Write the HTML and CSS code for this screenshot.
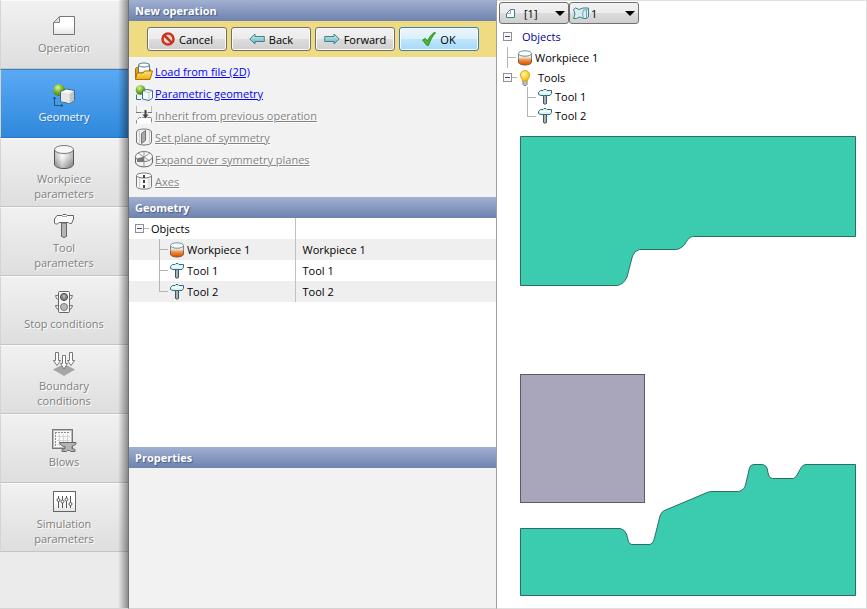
FILE: index.html
```html
<!DOCTYPE html>
<html lang="en">
<head>
    <meta charset="UTF-8">
    <meta name="viewport" content="width=device-width, initial-scale=1.0">
    <title>New operation</title>
    <link rel="stylesheet" href="styles.css">
</head>
<body>
    <!-- shared icons -->
    <svg class="defs" aria-hidden="true">
        <defs>
            <linearGradient id="gPaper" x1="0" y1="0" x2="0" y2="1">
                <stop offset="0" stop-color="#fff"/><stop offset=".5" stop-color="#fff"/><stop offset="1" stop-color="#e2e2e2"/>
            </linearGradient>
            <linearGradient id="gCyl" x1="0" y1="0" x2="0" y2="1">
                <stop offset="0" stop-color="#fff"/><stop offset=".4" stop-color="#f4f4f4"/><stop offset="1" stop-color="#777"/>
            </linearGradient>
            <linearGradient id="gSide" x1="0" y1="0" x2="1" y2="0">
                <stop offset="0" stop-color="#888" stop-opacity=".5"/><stop offset=".4" stop-color="#fff" stop-opacity=".5"/><stop offset="1" stop-color="#777" stop-opacity=".5"/>
            </linearGradient>
            <linearGradient id="gHot" x1="0" y1="0" x2="0" y2="1">
                <stop offset="0" stop-color="#fff"/><stop offset=".3" stop-color="#f3e0d0"/><stop offset=".55" stop-color="#f09040"/><stop offset="1" stop-color="#cc5000"/>
            </linearGradient>
            <linearGradient id="gTeal" x1="0" y1="0" x2="0" y2="1">
                <stop offset="0" stop-color="#d5f0f2"/><stop offset="1" stop-color="#5db0b8"/>
            </linearGradient>
            <linearGradient id="gFolder" x1="0" y1="0" x2="0" y2="1">
                <stop offset="0" stop-color="#ffe07a"/><stop offset="1" stop-color="#f0b010"/>
            </linearGradient>
            <radialGradient id="gGreen" cx=".4" cy=".3" r=".7">
                <stop offset="0" stop-color="#e4f5b0"/><stop offset=".4" stop-color="#8fc63a"/><stop offset="1" stop-color="#3f7c0c"/>
            </radialGradient>
            <radialGradient id="gBulb" cx=".4" cy=".35" r=".7">
                <stop offset="0" stop-color="#fff9c8"/><stop offset=".5" stop-color="#ffd83a"/><stop offset="1" stop-color="#f0b000"/>
            </radialGradient>
        </defs>
        <symbol id="hot" viewBox="0 0 16 16">
            <path d="M1.500 4v8c0 4 13 4 13 0V4z" fill="url(#gHot)" stroke="#8a5a3a"/>
            <path d="M1.500 9V4M14.500 4v5" fill="none" stroke="#6b929a"/>
            <ellipse cx="8" cy="3.500" rx="6.500" ry="2.700" fill="#fbfdfd" stroke="#6b929a"/>
        </symbol>
        <symbol id="hammer" viewBox="0 0 16 16">
            <path d="M6.500 6.500h3v8q-1.500 1.500-3 0z" fill="#a9b4b8" stroke="#3d5661"/>
            <path d="M1.500 5.500v-2L3.500 1.500H6l1-1h2l1 1h4.500v3l-1.500 2H4z" fill="#e1f2f4" stroke="#2d7284"/>
            <path d="M3 3.500h10" stroke="#fff"/>
        </symbol>
        <symbol id="shapes" viewBox="0 0 18 16">
            <circle cx="5.500" cy="5" r="4.800" fill="url(#gGreen)"/>
            <path d="M7.500 6l4-1.500 6 1v7.500l-3.500 2.500-6.500-1.500z" fill="#f8fafa" stroke="#2f7684"/>
            <path d="M8 6.500l6 1v7.500M14 7.500L17 6" fill="none" stroke="#b5cbd0"/>
            <path d="M1.500 9.500v5H6" fill="none" stroke="#2f7684"/>
        </symbol>
    </svg>

    <div class="app">
        <nav class="steps">
            <button type="button" class="step">
                <svg width="24" height="24" viewBox="0 0 24 24"><path d="M7.500 2.500h15v18h-21v-12z" fill="url(#gPaper)" stroke="#777"/><path d="M7.500 2.500v6h-6z" fill="#ddd" stroke="#888"/></svg>
                <span>Operation</span>
            </button>
            <button type="button" class="step active">
                <svg width="24" height="24" viewBox="0 0 24 24">
                    <circle cx="7" cy="7" r="6" fill="url(#gGreen)"/>
                    <path d="M8.500 8.500l6-2.500 8 1.500v10l-5 3-9-2z" fill="#fafafa" stroke="#3f6d7c"/>
                    <path d="M9 9l8.500 1.500V20l-8.500-2z" fill="#e6e6e6"/><path d="M17.500 10.500V20l4.500-3V8z" fill="#c3c6c8"/>
                    <path d="M2.500 22.500v-8M1 16l1.500-2L4 16M2.500 22.500h8M9 21l2 1.500L9 24" fill="none" stroke="#1d5878"/>
                </svg>
                <span>Geometry</span>
            </button>
            <button type="button" class="step">
                <svg width="24" height="24" viewBox="0 0 24 24"><path d="M2.500 4.500v14.500c0 2.500 4 4.500 9.500 4.500s9.500-2 9.500-4.500V4.500z" fill="url(#gCyl)" stroke="#555"/><path d="M3 5v14c0 2 4 4 9 4s9-2 9-4V5z" fill="url(#gSide)"/><ellipse cx="12" cy="4.500" rx="9.500" ry="4" fill="#f8f8f8" stroke="#777"/></svg>
                <span>Workpiece<br>parameters</span>
            </button>
            <button type="button" class="step">
                <svg width="24" height="24" viewBox="0 0 24 24"><path d="M9.500 9h5v13.500q-2.500 2-5 0z" fill="#b5b5b5" stroke="#666"/><path d="M2.500 9V5L5 1.500h5l1-1h3l1 1h6.500V5l-2 4.500h-2l-1-1H7l-1.500 1.500H3.500z" fill="#fbfbfb" stroke="#666"/><path d="M10 2.500h5" stroke="#aaa"/></svg>
                <span>Tool<br>parameters</span>
            </button>
            <button type="button" class="step">
                <svg width="24" height="24" viewBox="0 0 24 24"><path d="M6.500 5.500h-3l1 3 2 1M17.500 5.500h3l-1 3-2 1M6.500 15.500h-3l1 3 2 1M17.500 15.500h3l-1 3-2 1" fill="#eee" stroke="#777"/><rect x="6.500" y="1.500" width="11" height="21" rx="1" fill="#f4f4f4" stroke="#666"/><circle cx="12" cy="7" r="3.500" fill="#888" stroke="#444"/><circle cx="12" cy="6" r="1.500" fill="#b5b5b5"/><circle cx="12" cy="17" r="3.500" fill="#b8b8b8" stroke="#777"/></svg>
                <span>Stop conditions</span>
            </button>
            <button type="button" class="step">
                <svg width="24" height="24" viewBox="0 0 24 24"><path d="M12 12l11 5.500L12 24 1 17.500z" fill="#a5a5a5"/><path d="M3.500.5h3v8h2L5 13.500 1.500 8.500h2zM17.500.5h3v8h2L19 13.500 15.500 8.500h2zM10.500 3.500h3v8h2L12 17l-3.500-5.500h2z" fill="#fff" stroke="#777"/></svg>
                <span>Boundary<br>conditions</span>
            </button>
            <button type="button" class="step">
                <svg width="26" height="24" viewBox="0 0 26 24"><rect x="1.500" y="1.500" width="20" height="19" fill="#fafafa" stroke="#777"/><rect x="2.500" y="2.500" width="18" height="17" fill="none" stroke="#bbb"/><path d="M4 4.500h15M4.500 4v14" stroke="#888" stroke-dasharray="2 1"/><path d="M8.500 6v12M12.500 6v12M16.500 6v12M6 8.500h13M6 12.500h13M6 16.500h13" stroke="#d4d4d4"/><path d="M8.500 14.500H25v1.500l-4 2.500v2l3 1v2h-4.500l-1-1h-2l-1 1H11v-2l3-1v-2c-3 0-5-2-5.500-4z" fill="#b4b4b4" stroke="#666"/></svg>
                <span>Blows</span>
            </button>
            <button type="button" class="step">
                <svg width="24" height="24" viewBox="0 0 24 24"><rect x="1.500" y="1.500" width="22" height="20" fill="url(#gPaper)" stroke="#666"/><path d="M6.500 6v12M10.500 6v12M14.500 6v12M18.500 6v12" stroke="#555"/><circle cx="6.500" cy="10" r="1.500" fill="#fff" stroke="#555"/><circle cx="10.500" cy="11.500" r="1.500" fill="#fff" stroke="#555"/><circle cx="14.500" cy="9.500" r="1.500" fill="#fff" stroke="#555"/><circle cx="18.500" cy="14" r="1.500" fill="#fff" stroke="#555"/></svg>
                <span>Simulation<br>parameters</span>
            </button>
        </nav>

        <main class="editor">
            <h2 class="bar">New operation</h2>
            <div class="toolbar">
                <button type="button" class="btn"><svg width="14" height="14" viewBox="0 0 14 14"><circle cx="7" cy="7" r="5.500" fill="#f4d8d2" stroke="#c93522" stroke-width="2.500"/><path d="M3.500 3.500l7 7" stroke="#c93522" stroke-width="2.500"/></svg>Cancel</button>
                <button type="button" class="btn"><svg width="16" height="12" viewBox="0 0 16 12"><path d="M.8 6L6 1v2.500h9.300v5H6V11z" fill="url(#gTeal)" stroke="#43828c"/></svg>Back</button>
                <button type="button" class="btn"><svg width="16" height="12" viewBox="0 0 16 12"><path d="M15.200 6L10 1v2.500H.7v5H10V11z" fill="url(#gTeal)" stroke="#43828c"/></svg>Forward</button>
                <button type="button" class="btn ok"><svg width="14" height="14" viewBox="0 0 14 14"><path d="M.7 8l2.600-1.500L5.500 9C7 5.500 9.500 2.500 12 .7h1.500C10.500 4 8 8.500 6.500 13.300H4.800z" fill="#4fb52e" stroke="#2c8a1c"/></svg>OK</button>
            </div>

            <ul class="links">
                <li>
                    <svg width="18" height="18" viewBox="0 0 18 18"><path d="M.5 17V6.500l1-1h4l1 2h9V12" fill="#dda010" stroke="#a87400"/><path d="M3.500 3v8h11V3z" fill="url(#gPaper)" stroke="#577f8c"/><ellipse cx="9" cy="3" rx="5.500" ry="2" fill="#fff" stroke="#577f8c"/><path d="M.5 17.500L2 11h6l1.500-2H17.500L15 17.500z" fill="url(#gFolder)" stroke="#a87400"/></svg>
                    <a href="#load">Load from file (2D)</a>
                </li>
                <li><svg width="18" height="16"><use href="#shapes"/></svg><a href="#parametric">Parametric geometry</a></li>
                <li class="off">
                    <svg width="18" height="18" viewBox="0 0 18 18"><path d="M1.500 0v6.500h15V0" fill="#f4f4f4" stroke="#bbb"/><path d="M1 6.500h5M13 6.500h4" stroke="#777"/><path d="M1.500 17.500v-3l3-3h12v6" fill="#fff" stroke="#888" stroke-dasharray="4 1"/><path d="M10.500 4v5" stroke="#444" stroke-width="2"/><path d="M7.500 8.500h6l-3 4z" fill="#444"/></svg>
                    <a href="#inherit">Inherit from previous operation</a>
                </li>
                <li class="off">
                    <svg width="18" height="18" viewBox="0 0 18 18"><path d="M1.500 4v10c0 4 15 4 15 0V4c0-4-15-4-15 0z" fill="#f2f2f2" stroke="#777"/><path d="M4.500 3v13M14.500 3v13" stroke="#ccc"/><path d="M6.500 5.500l4-3v10l-4 3z" fill="#aaa" stroke="#777"/></svg>
                    <a href="#plane">Set plane of symmetry</a>
                </li>
                <li class="off">
                    <svg width="18" height="18" viewBox="0 0 18 18"><path d="M.5 6v6c0 6.500 17 6.500 17 0V6" fill="#f2f2f2" stroke="#666"/><ellipse cx="9" cy="6.500" rx="8.500" ry="5" fill="#f8f8f8" stroke="#777"/><path d="M9 1v15M3 3l12 8M15 3L3 11" stroke="#999"/><path d="M2 8.500l7-2V12H2z" fill="#777"/></svg>
                    <a href="#expand">Expand over symmetry planes</a>
                </li>
                <li class="off">
                    <svg width="18" height="18" viewBox="0 0 18 18"><path d="M1.500 3.500v11c0 3.500 15 3.500 15 0v-11" fill="#f6f6f6" stroke="#777"/><ellipse cx="9" cy="3.500" rx="7.500" ry="2.500" fill="#fff" stroke="#777"/><path d="M4.500 6v9M14 6v9" stroke="#ccc"/><path d="M9 3v13" stroke="#444" stroke-width="2" stroke-dasharray="3 2"/></svg>
                    <a href="#axes">Axes</a>
                </li>
            </ul>

            <h2 class="bar">Geometry</h2>
            <div class="grid">
                <table>
                    <colgroup><col class="names"><col></colgroup>
                    <tr><td><div class="cell root"><i class="toggle"></i>Objects</div></td><td></td></tr>
                    <tr><td><div class="cell leaf"><svg width="16" height="16"><use href="#hot"/></svg>Workpiece 1</div></td><td>Workpiece 1</td></tr>
                    <tr><td><div class="cell leaf"><svg width="16" height="16"><use href="#hammer"/></svg>Tool 1</div></td><td>Tool 1</td></tr>
                    <tr><td><div class="cell leaf last"><svg width="16" height="16"><use href="#hammer"/></svg>Tool 2</div></td><td>Tool 2</td></tr>
                </table>
            </div>

            <h2 class="bar">Properties</h2>
            <div class="props"></div>
        </main>

        <section class="view">
            <div class="pickers">
                <div class="picker">
                    <svg width="18" height="16" viewBox="0 0 18 16"><path d="M8.500 4.500h4v8h-8v-4z" fill="#fff" stroke="#3e7d8a"/><path d="M8.500 4.500v4h-4" fill="none" stroke="#8ab0b8"/></svg>
                    <select aria-label="Operation number"><option>[1]</option></select>
                </div>
                <div class="picker">
                    <svg width="18" height="16" viewBox="0 0 18 16"><path d="M1.500 4.500l2-1.500q3.500 3 7.500 0h5.500v9l-2 1.500h-3q-4-3-7 0h-3q3-4.500 0-9z" fill="#d6eef0" stroke="#3e7d8a"/><path d="M11.500 5q-2 4 0 8M11.500 5h3v8M14.500 5l2-2" fill="none" stroke="#6fa3ad"/></svg>
                    <select aria-label="Blow number"><option>1</option></select>
                </div>
            </div>
            <ul class="tree">
                <li class="top"><i class="toggle"></i><span>Objects</span></li>
                <li class="item"><svg width="16" height="16"><use href="#hot"/></svg>Workpiece 1</li>
                <li class="group"><i class="toggle"></i><svg width="16" height="16" viewBox="0 0 16 16"><path d="M6 10.500h4v4l-1 1H7l-1-1z" fill="#b9c2c6" stroke="#71838a"/><path d="M8 .5a4.700 4.700 0 0 1 4.700 4.700c0 2.500-2.200 3.200-2.200 5.800h-5c0-2.600-2.200-3.300-2.200-5.800A4.700 4.700 0 0 1 8 .5z" fill="url(#gBulb)" stroke="#dba52a"/></svg>Tools</li>
                <li class="sub"><svg width="16" height="16"><use href="#hammer"/></svg>Tool 1</li>
                <li class="sub last"><svg width="16" height="16"><use href="#hammer"/></svg>Tool 2</li>
            </ul>
            <svg class="scene" viewBox="497 127 369 481" preserveAspectRatio="xMinYMin meet" role="img" aria-label="Workpiece between two tools">
                <path class="tool" d="M520.500 136.500H855.500V236.500H693.500C690 236.500 688 239 686 242.500C684 246 680 249 676.500 249.500H639.500Q634 251 632.500 256L627 277Q624 284 617.500 285.500H520.500Z"/>
                <rect class="workpiece" x="520.500" y="374.500" width="124" height="128"/>
                <path class="tool" d="M520.500 528.500H620.500Q625 530 626.500 534L628.500 541.500Q629.500 544.500 632 544.500H650Q653 543.500 654 540L660 516Q661.500 511.500 664.500 510.500L706 493Q709 491.500 712 491.500H738.500Q744.500 490 745.500 485L749.500 468Q750.500 464.500 754 464.500H762.500Q766 465 767 468L768.500 475Q769.500 478.500 772.500 478.500H793.500Q796 477 797 475L801.500 467Q803 464.500 806 464.500H855.500V595.500H520.500Z"/>
            </svg>
        </section>
    </div>
</body>
</html>
```

FILE: styles.css
```css
* {
    box-sizing: border-box;
}
body {
    margin: 0;
    font-family: "Segoe UI", "Open Sans", "Noto Sans", sans-serif;
    font-size: 11px;
    line-height: 15px;
    color: #000;
    background: #fff;
}
button, select {
    font: inherit;
    color: inherit;
}
svg {
    flex: none;
}
.defs {
    position: absolute;
    width: 0;
    height: 0;
}
.app {
    display: grid;
    grid-template-columns: 128px 369px 1fr;
    min-height: 100vh;
}

/* left column with the wizard steps */
.steps {
    position: relative;
    background: #ebebeb;
    border-bottom: 1px solid #d4d4d4;
}
.steps::after {
    content: "";
    position: absolute;
    top: 0;
    right: 0;
    bottom: 0;
    width: 10px;
    background: linear-gradient(to right, rgba(0, 0, 0, 0), rgba(0, 0, 0, 0.4));
    pointer-events: none;
}
.step {
    display: flex;
    flex-direction: column;
    align-items: center;
    justify-content: center;
    gap: 2px;
    width: 100%;
    height: 69px;
    padding: 0 1px 0 0;
    border: none;
    border-left: 1px solid #d4d4d4;
    border-top: 1px solid #fafafa;
    border-bottom: 1px solid #c4c4c4;
    background: linear-gradient(#f1f1f1, #dedede);
    color: #808080;
    text-shadow: 1px 1px 0 #fff;
}
.step.active {
    border-top-color: #3b7fc4;
    border-bottom-color: #2a76c4;
    background: linear-gradient(#5aa9f5, #2f88dc);
    color: #fff;
    text-shadow: 1px 1px 0 #2b6fb5;
}

/* middle column */
.editor {
    display: flex;
    flex-direction: column;
    background: #f2f2f2;
    border-left: 1px solid #707070;
    border-right: 1px solid #a0a0a0;
    border-bottom: 1px solid #d4d4d4;
}
.bar {
    margin: 0;
    height: 21px;
    padding: 0 6px;
    line-height: 21px;
    font-size: 11px;
    font-weight: bold;
    color: #fff;
    background: linear-gradient(#a1b0d2, #6e82ae);
    text-shadow: 1px 1px 1px #4a5c86;
}
.toolbar {
    display: flex;
    justify-content: flex-end;
    align-items: center;
    gap: 4px;
    height: 36px;
    padding-right: 17px;
    background: #eedb82;
}
.btn {
    display: flex;
    align-items: center;
    justify-content: center;
    gap: 4px;
    width: 80px;
    height: 24px;
    padding: 0;
    border: 1px solid #707070;
    border-radius: 3px;
    background: linear-gradient(#f2f2f2 0%, #ebebeb 50%, #dddddd 50%, #cfcfcf 100%);
    box-shadow: inset 0 0 0 1px #fafafa;
}
.btn.ok {
    border-color: #3c7fb1;
    background: linear-gradient(#eaf6fd 0%, #d9f0fc 50%, #bee6fd 50%, #a7d9f5 100%);
}
.links {
    list-style: none;
    margin: 0;
    padding: 3px 6px 5px;
}
.links li {
    display: flex;
    align-items: center;
    gap: 2px;
    height: 22px;
}
.links a {
    color: #0000ff;
}
.links .off a {
    color: #838383;
    text-shadow: 1px 1px 0 #fff;
}
.grid {
    height: 229px;
    background: #fff;
}
.grid table {
    width: 100%;
    table-layout: fixed;
    border-collapse: collapse;
}
.grid .names {
    width: 166px;
}
.grid tr:nth-child(even) {
    background: #efefef;
}
.grid td {
    height: 21px;
    padding: 0 0 0 7px;
}
.grid td:first-child {
    padding: 0;
    border-right: 1px solid #c0c0c0;
}
.cell {
    position: relative;
    display: flex;
    align-items: center;
    gap: 2px;
    height: 21px;
}
.cell.root {
    padding-left: 6px;
    gap: 7px;
}
.cell.leaf {
    padding-left: 40px;
}

/* tree box and connecting lines */
.toggle {
    position: relative;
    flex: none;
    width: 9px;
    height: 9px;
    border: 1px solid #919191;
    background: #f8f8f8;
}
.toggle::before {
    content: "";
    position: absolute;
    top: 3px;
    left: 1px;
    width: 5px;
    height: 1px;
    background: #33479c;
}
.root .toggle::after, .group .toggle::after {
    content: "";
    position: absolute;
    top: 3px;
    left: 8px;
    width: 5px;
    height: 1px;
    background: #b4b4b4;
}
.leaf::before, .item::before, .sub::before {
    content: "";
    position: absolute;
    top: 0;
    bottom: 0;
    width: 1px;
    background: #b4b4b4;
}
.leaf::after, .item::after, .sub::after {
    content: "";
    position: absolute;
    top: 10px;
    width: 9px;
    height: 1px;
    background: #b4b4b4;
}
.last::before {
    bottom: auto;
    height: 10px;
}
.leaf::before, .leaf::after {
    left: 30px;
}

.props {
    flex: 1;
}

/* right column with the model view */
.view {
    display: flex;
    flex-direction: column;
    min-width: 0;
    border-top: 1px solid #e0e0e0;
    border-right: 1px solid #e0e0e0;
    border-bottom: 1px solid #e0e0e0;
}
.pickers {
    display: flex;
    padding: 1px 2px 2px;
}
.picker {
    position: relative;
    width: 70px;
    height: 22px;
}
.picker svg {
    position: absolute;
    top: 3px;
    left: 3px;
    pointer-events: none;
}
.picker select {
    appearance: none;
    width: 100%;
    height: 22px;
    padding: 0 0 0 21px;
    border: 1px solid #707070;
    border-radius: 3px;
    background: linear-gradient(#f2f2f2 0%, #ebebeb 50%, #dddddd 50%, #cfcfcf 100%);
}
.picker:first-child select {
    padding-left: 24px;
}
.picker::after {
    content: "";
    position: absolute;
    top: 9px;
    right: 4px;
    border: 5px solid transparent;
    border-top-color: #000;
    border-bottom: none;
    pointer-events: none;
}
.tree {
    list-style: none;
    margin: 0;
    padding: 0 0 2px 6px;
}
.tree li {
    position: relative;
    display: flex;
    align-items: center;
    gap: 2px;
    height: 19px;
}
.tree .top {
    height: 21px;
    gap: 10px;
    color: #00009c;
}
.tree .item {
    height: 21px;
    padding-left: 14px;
}
.tree .group {
    gap: 5px;
}
.tree .sub {
    padding-left: 34px;
}
.tree .item::before, .tree .item::after {
    left: 4px;
}
.tree .sub::before, .tree .sub::after {
    left: 24px;
}
.scene {
    flex: 1;
    width: 100%;
    min-height: 0;
}
.tool {
    fill: #3bccb0;
    stroke: #2c6e62;
}
.workpiece {
    fill: #a9a6bb;
    stroke: #5c5a66;
}
```
